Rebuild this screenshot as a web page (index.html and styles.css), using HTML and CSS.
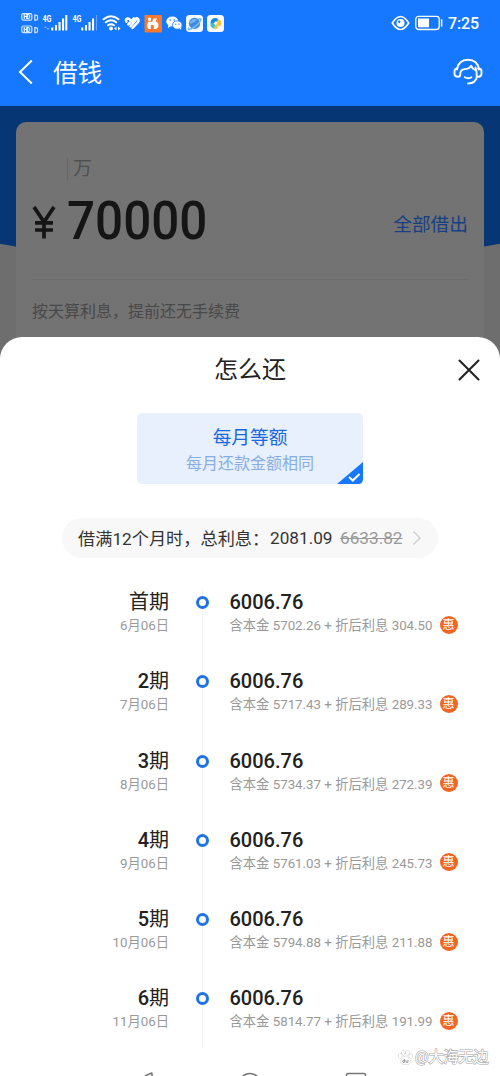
FILE: index.html
```
<!DOCTYPE html>
<html lang="zh-CN">
<head>
<meta charset="utf-8">
<title>借钱</title>
<link rel="stylesheet" href="styles.css">
</head>
<body>
<div class="screen">
  <header class="header">
    <div class="status">
      <svg class="status-icons" width="230" height="46" viewBox="0 0 230 46">
        <g fill="none" stroke="#d5e6ff" stroke-width="1.2">
          <rect x="21.8" y="13.6" width="10" height="6.6" rx="1.5"/>
          <rect x="21.8" y="26" width="10" height="6.6" rx="1.5"/>
          <path d="M34.8 15.2v5h1q1.8 0 1.8-1.8v-1.4q0-1.8-1.8-1.8zM34.8 27.6v5h1q1.8 0 1.8-1.8v-1.4q0-1.8-1.8-1.8z"/>
        </g>
        <g class="svg-text">
          <text x="23.3" y="19.3" font-size="6.5" textLength="7">HD</text>
          <text x="23.3" y="31.7" font-size="6.5" textLength="7">HD</text>
          <text x="42.5" y="22" font-size="9.5" textLength="9" lengthAdjust="spacingAndGlyphs">4G</text>
          <text x="72.5" y="22" font-size="9.5" textLength="9" lengthAdjust="spacingAndGlyphs">4G</text>
        </g>
        <g fill="#fff">
          <path d="M51.3 27.5h2v3h-2zM55 25h2v5.5h-2zM58.5 22h2.1v8.5h-2.1zM62 18.5h2.1v12h-2.1zM65.3 15h2v15.5h-2z"/>
          <path d="M81.3 27.5h2v3h-2zM85 25h2v5.5h-2zM88.5 22h2.1v8.5h-2.1zM92 18.5h2.1v12h-2.1z"/>
          <path d="M96 15h1v15.5h-1z" opacity=".35"/>
          <path d="M44 28l1.5-2 1.5 2zM46.500 28l1.500 2 1.500-2z" opacity=".4"/>
          <circle cx="111" cy="28.500" r="2"/>
          <path d="M114 28.500l2.500-2v4zM120.500 28.500l-2.500-2v4z"/>
        </g>
        <g fill="none" stroke="#fff" stroke-width="2" stroke-linecap="round">
          <path d="M103.500 19.300q7.500-6 15 0M105.800 22.300q5.200-4 10.400 0M108 25.300q3-2.200 6 0"/>
        </g>
        <g fill="none" stroke="#fff" stroke-width="2.500" stroke-linecap="round">
          <path d="M126.400 21.800q-1.200-2.600 1-3.300 1.700-.2 2.800 1.500M128.300 24.300l5.600-6M130.500 26.300l5.300-6.500"/>
          <path d="M132.500 28l5-5.300q1.800-2.200.6-3.800-1.200-1.200-2.800.3"/>
        </g>
        <rect x="144.500" y="15" width="17.500" height="17.500" rx="1" fill="#f47a31"/>
        <g fill="#fff">
          <path d="M148.200 22h3.800l1.500-3.500h3.500l-1.500 3.200q3 .3 3 3.300 0 3.700-3.500 4h-1.500q1.700-3.500-1.200-4.200-2.300.2-1.300 4.200h-2.500q-2.500-3-.3-7z"/>
          <path d="M148 18.200q1.800-1.500 3.200 0l-.5 3h-2.400z"/>
          <ellipse cx="172.300" cy="21.500" rx="6" ry="5"/><path d="M168.500 25l-.7 3 3-1.800z"/>
          <ellipse cx="177.300" cy="25" rx="4.800" ry="4.200" stroke="#1677ff" stroke-width=".8"/><path d="M179.500 28l1.500 2 .3-3z"/>
        </g>
        <g fill="#1677ff"><circle cx="170.300" cy="20" r=".8"/><circle cx="174.300" cy="20" r=".8"/><circle cx="175.700" cy="24.200" r=".6"/><circle cx="179" cy="24.200" r=".6"/></g>
        <rect x="186" y="15" width="17" height="17" rx="3.500" fill="#f2f8ff"/>
        <circle cx="194.500" cy="23.400" r="5.600" fill="#438bd9"/>
        <path d="M189 27.500q-2 2.500 1 1.800 5-1.500 9.500-7 2.500-4 .2-3.500-1 .3-1.700.8" fill="none" stroke="#74b9fa" stroke-width="1.500"/>
        <path d="M190 22q3-4.500 7-2.500-2.500 3.300-6.700 4.500z" fill="#72b9f7"/>
        <rect x="207" y="15" width="17" height="17" rx="3.500" fill="#fff"/>
        <path d="M210.500 22.500q.5-4.500 5-4.500 3.500.2 2.700 3.500h-3q-1 2.500-3.500 2.500z" fill="#168be3"/>
        <path d="M217.500 19.500q4 0 4 3.500-.5 3.500-4 3.200-2.500-.5-2.300-2 2.800-.8 2.300-4.700z" fill="#ffc53a"/>
        <path d="M210.300 22.500q2 1.500 4.200 1 .5 2.500 2.700 3-1 2.500-3 2.300-4.200-1-3.900-6.300z" fill="#35bfdc"/>
        <path d="M213.500 26q2.500 1.500 5.300.3-.8 3.200-3.800 3z" fill="#f8c943"/>
        <circle cx="215.500" cy="23.500" r="1.200" fill="#fff"/>
      </svg>
      <div class="status-right">
        <svg width="19" height="16" viewBox="0 0 19 16">
          <path d="M1.300 8Q9.500-5 17.700 8 9.500 21 1.300 8z" fill="none" stroke="#fff" stroke-width="1.600"/>
          <circle cx="9.500" cy="8" r="4" fill="#fff"/><circle cx="8.200" cy="6.800" r="1.200" fill="#1677ff"/>
        </svg>
        <svg class="battery" width="28" height="16" viewBox="0 0 28 16">
          <rect x=".8" y="1.300" width="23.400" height="13.200" rx="2.800" fill="none" stroke="#fff" stroke-width="1.300"/>
          <rect x="3" y="3.500" width="11" height="8.800" fill="#fff"/>
          <path d="M26.600 4.200v7.500" stroke="#fff" stroke-width="1.500"/>
        </svg>
        <span class="clock">7:25</span>
      </div>
    </div>
    <nav class="nav">
      <svg width="16" height="26" viewBox="0 0 16 26"><path d="M13.800 1.500L2 13l11.800 11.500" fill="none" stroke="#fff" stroke-width="2"/></svg>
      <h1 class="nav-title">借钱</h1>
      <svg class="service" width="30" height="28" viewBox="0 0 30 28" fill="none" stroke="#fff" stroke-width="1.900" stroke-linecap="round" stroke-linejoin="round">
        <path d="M4 11.500C5 5 9 1.800 15 1.800S25 5 26 11.500"/>
        <path d="M4.200 10.800H3.500C2 10.800 1.500 12 1.500 13.500v2.300c0 2 1.500 3 3.500 3 1.500 0 2.200-.8 2.200-2.300 0-3.500 1.800-5.200 4.600-5.400 3 0 5-.7 6.400-3.300.5 2.500 2.500 3.500 4.500 4.300"/>
        <path d="M25.300 10.800h1.200c1.500 0 2 1.200 2 2.700v2.300c0 2-1.500 3-3.500 3h-1c-1 4.500-4.500 6.700-9 6.700"/>
        <path d="M22.500 9.500q1.700 5 1.200 9.300M11.800 19.300q3.300 2 6.600 0"/>
      </svg>
    </nav>
  </header>

  <main class="backdrop">
    <section class="loan-card">
      <div class="unit"><span class="unit-line"></span>万</div>
      <div class="amount-row">
        <svg class="yen" width="24" height="33" viewBox="0 0 24 33" fill="none" stroke="#151515" stroke-width="3.700"><path d="M2 1l10 15L22 1M12 16v16.500M3 16.800h18M3 24h18"/></svg>
        <span class="amount">70000</span>
        <span class="borrow-all">全部借出</span>
      </div>
      <p class="note">按天算利息，提前还无手续费</p>
    </section>
  </main>

  <section class="sheet">
    <div class="sheet-head">
      <h2 class="sheet-title">怎么还</h2>
      <svg class="close" width="22" height="22" viewBox="0 0 22 22"><path d="M1.500 1.500l19 19M20.500 1.500l-19 19" stroke="#222" stroke-width="2.100" stroke-linecap="round"/></svg>
    </div>
    <div class="method">
      <div class="method-name">每月等额</div>
      <div class="method-desc">每月还款金额相同</div>
      <svg class="method-check" width="26" height="22" viewBox="0 0 26 22"><path d="M26 0v17q0 5-5 5H0z" fill="#1677ff"/><path d="M12 15l3.800 3.500 6.700-6.500" fill="none" stroke="#fff" stroke-width="2"/></svg>
    </div>
    <div class="summary">
      <span class="summary-label">借满12个月时，总利息：</span><span class="total">2081.09</span><s class="old">6633.82</s>
      <svg width="10" height="16" viewBox="0 0 10 16"><path d="M1.500 1.500L8 8l-6.500 6.500" fill="none" stroke="#ccc" stroke-width="1.200"/></svg>
    </div>
    <ol class="plan">
      <li class="term"><div class="when"><b>首期</b><small>6月06日</small></div><i class="dot"></i><div class="pay"><strong>6006.76</strong><div class="detail">含本金 5702.26 + 折后利息 304.50<em>惠</em></div></div></li>
      <li class="term"><div class="when"><b><span class="num">2</span>期</b><small>7月06日</small></div><i class="dot"></i><div class="pay"><strong>6006.76</strong><div class="detail">含本金 5717.43 + 折后利息 289.33<em>惠</em></div></div></li>
      <li class="term"><div class="when"><b><span class="num">3</span>期</b><small>8月06日</small></div><i class="dot"></i><div class="pay"><strong>6006.76</strong><div class="detail">含本金 5734.37 + 折后利息 272.39<em>惠</em></div></div></li>
      <li class="term"><div class="when"><b><span class="num">4</span>期</b><small>9月06日</small></div><i class="dot"></i><div class="pay"><strong>6006.76</strong><div class="detail">含本金 5761.03 + 折后利息 245.73<em>惠</em></div></div></li>
      <li class="term"><div class="when"><b><span class="num">5</span>期</b><small>10月06日</small></div><i class="dot"></i><div class="pay"><strong>6006.76</strong><div class="detail">含本金 5794.88 + 折后利息 211.88<em>惠</em></div></div></li>
      <li class="term"><div class="when"><b><span class="num">6</span>期</b><small>11月06日</small></div><i class="dot"></i><div class="pay"><strong>6006.76</strong><div class="detail">含本金 5814.77 + 折后利息 191.99<em>惠</em></div></div></li>
    </ol>
    <svg class="system-nav" width="500" height="4" viewBox="0 0 500 4" fill="none" stroke="#777" stroke-width="1.600">
      <path d="M145 4l6-2.800q1-.4 1 .8V4"/><circle cx="250" cy="12" r="10.500"/><path d="M346.500 4V3q0-1.500 1.500-1.500h16q1.500 0 1.500 1.500v1"/>
    </svg>
  </section>

  <div class="watermark">
    <svg width="15" height="15" viewBox="0 0 15 15" fill="#fff" stroke="#aaa" stroke-width=".7">
      <ellipse cx="2.200" cy="6" rx="1.700" ry="2.200"/><ellipse cx="5.400" cy="2.800" rx="1.600" ry="2.200"/><ellipse cx="9.500" cy="2.800" rx="1.600" ry="2.200"/><ellipse cx="12.700" cy="6.200" rx="1.700" ry="2.200"/>
      <path d="M7.500 6.300q2 0 3 2.200 3 2 2 4.300-1 1.800-5 1.200-4 .6-5-1.200-1-2.300 2-4.300 1-2.200 3-2.200z"/>
      <path d="M6.500 9v3.300H5q-1.200-1.200 0-2h1.500M8 10v2.300h2V10" fill="none" stroke="#777"/>
    </svg>
    <span>@大海无边</span>
  </div>
</div>
</body>
</html>
```
FILE: styles.css
```
* { box-sizing: border-box; }
body {
  margin: 0;
  font-family: Roboto, "Noto Sans CJK SC", sans-serif;
  color: #222;
}
h1, h2, p, ol { margin: 0; padding: 0; font-weight: 400; }
svg { display: block; flex: none; }
.screen {
  position: relative;
  display: flex;
  flex-direction: column;
  width: 500px;
  height: 1076px;
  overflow: hidden;
  background: #fff;
}
.header { height: 106px; background: #1677ff; color: #fff; flex: none; }
.status { height: 46px; display: flex; justify-content: space-between; }
.svg-text { fill: #fff; font-weight: 700; }
.status-right { display: flex; align-items: center; padding-right: 21px; }
.battery { margin-left: 5px; }
.clock { margin-left: 5px; padding-top: 1px; font-size: 16px; line-height: 46px; font-weight: 500; letter-spacing: -.1px; }
.nav { display: flex; align-items: center; height: 52px; padding: 0 17px 0 18px; }
.nav-title { margin-left: 19px; padding-top: 3px; font-size: 24.600px; line-height: 49px; }
.service { margin-left: auto; }

.backdrop {
  position: relative;
  flex: none;
  height: 231px;
  padding: 16px 16px 0;
  background: #6e6e6e;
}
.backdrop::before {
  content: "";
  position: absolute;
  inset: 0;
  background: #063674;
  clip-path: ellipse(500px 159px at 50% 0);
}
.loan-card {
  position: relative;
  height: 250px;
  padding: 0 16px;
  border-radius: 10px 10px 0 0;
  background: #737373;
}
.unit {
  display: flex;
  align-items: center;
  gap: 5px;
  padding: 33px 0 0 35px;
  font-size: 19px;
  line-height: 28px;
  color: #505050;
}
.unit-line { width: 1px; height: 22px; background: #666; }
.amount-row {
  display: flex;
  align-items: center;
  height: 97px;
  border-bottom: 1px solid #6c6c6c;
  padding-bottom: 20px;
}
.yen { margin-top: 2px; }
.amount {
  width: 150px;
  margin-left: 11px;
  font-size: 54px;
  line-height: 60px;
  font-weight: 500;
  color: #151515;
  transform: scaleX(.915);
  transform-origin: left;
}
.borrow-all { margin-left: auto; font-size: 18.700px; color: #173f83; padding-top: 3px; }
.note { padding-top: 17px; font-size: 16px; line-height: 30px; color: #484848; }

.sheet {
  position: relative;
  flex: 1;
  display: flex;
  flex-direction: column;
  background: #fff;
}
.sheet::before {
  content: "";
  position: absolute;
  top: 0;
  left: 0;
  right: 0;
  height: 22px;
  background: #6e6e6e;
}
.sheet-head {
  position: relative;
  display: grid;
  grid-template-columns: 1fr auto 1fr;
  align-items: center;
  height: 66px;
  padding: 0 20px;
  border-radius: 22px 22px 0 0;
  background: #fff;
}
.sheet-title { grid-column: 2; padding-top: 1px; font-size: 24px; line-height: 65px; }
.close { justify-self: end; }
.method {
  position: relative;
  align-self: center;
  width: 226px;
  height: 71px;
  margin-top: 10px;
  padding-top: 12px;
  border-radius: 5px;
  background: #e8effd;
  text-align: center;
}
.method-name { font-size: 18.700px; line-height: 26px; color: #1669df; }
.method-desc { font-size: 16px; line-height: 25px; color: #86aee2; }
.method-check { position: absolute; right: 0; bottom: 0; }
.summary {
  display: flex;
  align-items: center;
  align-self: center;
  width: 376px;
  height: 40px;
  margin-top: 34px;
  padding-left: 16px;
  border-radius: 20px;
  background: #f8f8f8;
  font-size: 17.200px;
  color: #333;
  white-space: nowrap;
}
.summary-label { width: 192px; padding-bottom: 2px; }
.total { width: 63px; }
.old { margin: 0 9px 0 7px; color: #999; }
.plan {
  flex: none;
  height: 460px;
  margin-top: 30px;
  list-style: none;
  background: linear-gradient(#f3f3f3, #f3f3f3) 202px 0 / 1px 100% no-repeat;
}
.term {
  display: grid;
  grid-template-columns: 169px 67px 1fr;
  height: 79.300px;
}
.when { display: flex; flex-direction: column; align-items: flex-end; }
.when b { padding-top: 1px; font-size: 20px; line-height: 26px; font-weight: 400; }
.num { font-weight: 500; }
.when small { font-size: 13.300px; line-height: 21px; color: #999; }
.dot {
  justify-self: center;
  width: 13px;
  height: 13px;
  margin-top: 8px;
  border: 3.500px solid #1e72ea;
  border-radius: 50%;
  background: #fff;
}
.pay { margin-left: -6.500px; }
.pay strong { display: block; font-size: 20px; line-height: 28px; font-weight: 500; }
.detail {
  display: flex;
  align-items: center;
  height: 17px;
  font-size: 13.300px;
  color: #999;
  white-space: nowrap;
}
.detail em {
  width: 18px;
  height: 18px;
  margin-left: 7px;
  border-radius: 50%;
  background: #f26522;
  color: #fff;
  font-size: 12px;
  line-height: 18px;
  font-style: normal;
  text-align: center;
}
.system-nav { margin-top: auto; }
.watermark {
  position: absolute;
  left: 398px;
  top: 1046px;
  display: flex;
  align-items: center;
  gap: 2px;
  font-size: 15px;
  line-height: 22px;
  white-space: nowrap;
  color: #fff;
  -webkit-text-stroke: 1.200px #aaa;
  paint-order: stroke fill;
}
```
